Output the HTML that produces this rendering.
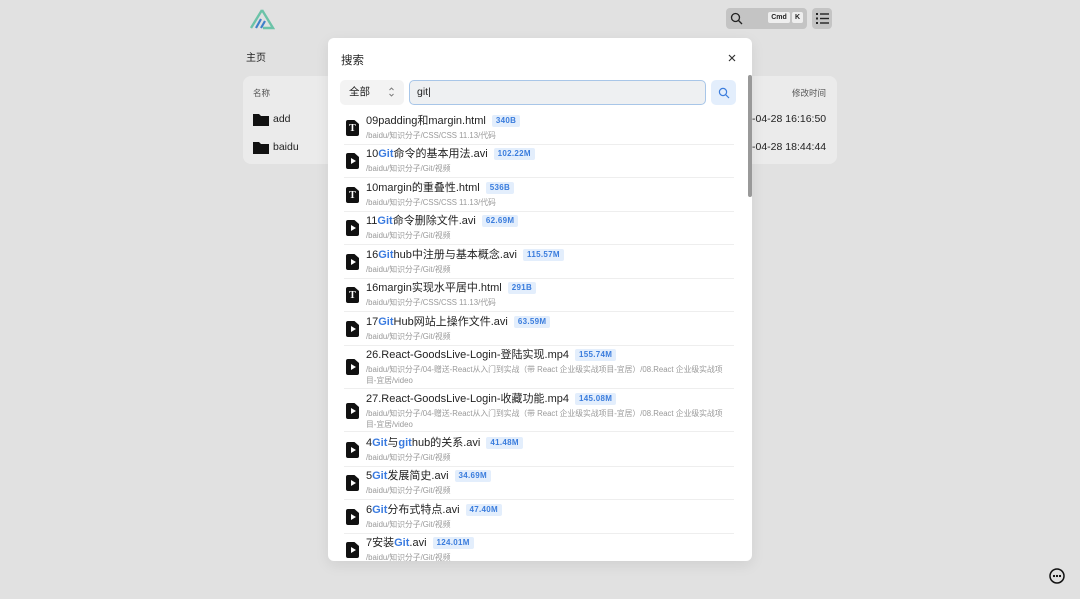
<!DOCTYPE html>
<html><head><meta charset="utf-8"><style>
*{margin:0;padding:0;box-sizing:border-box}
body{width:1080px;height:599px;background:#e1e1e1;font-family:"Liberation Sans","Noto Sans CJK SC",sans-serif;position:relative;overflow:hidden;color:#222}
.abs{position:absolute}
.card{left:243px;top:76px;width:594px;height:88px;background:#ebebeb;border-radius:8px}
.modal{left:328px;top:38px;width:424px;height:523px;background:#fff;border-radius:6px;overflow:hidden;box-shadow:0 4px 14px rgba(0,0,0,.08)}
.item{position:absolute;left:16px;width:390px}
.ic{position:absolute;left:2px;width:13px;height:16px;background:#111;border-radius:2px;clip-path:polygon(0 0,65% 0,100% 25%,100% 100%,0 100%)}
.ic.v::after{content:"";position:absolute;left:4.5px;top:5px;border-left:5px solid #fff;border-top:3px solid transparent;border-bottom:3px solid transparent}
.ic.tx{color:#fff;font:bold 10px 'Liberation Serif';text-align:center;line-height:17px}
.t{position:absolute;left:22px;font-size:11px;color:#222;white-space:nowrap;line-height:14px}
.t b{color:#3a7be0;font-weight:bold}
.bd{display:inline-block;margin-left:6px;background:#e3eefc;color:#3b7ddd;font-size:8px;font-weight:bold;padding:1px 4px;border-radius:2px;line-height:10px;vertical-align:1px;letter-spacing:.3px}
.p{position:absolute;left:22px;font-size:7.8px;color:#999;line-height:10.5px;width:372px}
.sep{position:absolute;left:16px;width:390px;height:1px;background:#eee}
</style></head><body>
<svg class="abs" style="left:249px;top:8px" width="26" height="22" viewBox="0 0 26 22"><path d="M13 2L2 20M13 2L24 20H14" stroke="#6cc3a8" stroke-width="2.4" fill="none"/><path d="M12 11L7 20M16 13l-4 7" stroke="#3f80c9" stroke-width="2.2"/></svg>
<div class="abs" style="left:726px;top:8px;width:81px;height:21px;background:#c4c4c4;border-radius:4px"></div>
<svg class="abs" style="left:730px;top:12px" width="13" height="13"><circle cx="5.5" cy="5.5" r="4" stroke="#222" stroke-width="1.3" fill="none"/><path d="M8.5 8.5L12 12" stroke="#222" stroke-width="1.3"/></svg>
<div class="abs" style="left:768px;top:12px;width:22px;height:11px;background:#eee;border-radius:2px;font-size:7px;font-weight:bold;text-align:center;line-height:11px">Cmd</div>
<div class="abs" style="left:792px;top:12px;width:11px;height:11px;background:#eee;border-radius:2px;font-size:7px;font-weight:bold;text-align:center;line-height:11px">K</div>
<div class="abs" style="left:812px;top:8px;width:20px;height:21px;background:#c4c4c4;border-radius:4px"></div>
<svg class="abs" style="left:816px;top:12px" width="13" height="13"><g fill="#222"><rect x="0" y="1" width="2" height="2"/><rect x="0" y="5.5" width="2" height="2"/><rect x="0" y="10" width="2" height="2"/><rect x="4" y="1.3" width="9" height="1.4"/><rect x="4" y="5.8" width="9" height="1.4"/><rect x="4" y="10.3" width="9" height="1.4"/></g></svg>
<div class="abs" style="left:246px;top:49px;font-size:10px">主页</div>
<div class="abs card"></div>
<div class="abs" style="left:253px;top:87px;font-size:8.5px;color:#555">名称</div>
<div class="abs" style="left:792px;top:87px;font-size:8.5px;color:#555">修改时间</div>
<svg class="abs" style="left:253px;top:113px" width="16" height="13"><path d="M0 1h6l2 2h8v10H0z" fill="#111"/></svg>
<div class="abs" style="left:273px;top:113px;font-size:10.5px">add</div>
<svg class="abs" style="left:253px;top:141px" width="16" height="13"><path d="M0 1h6l2 2h8v10H0z" fill="#111"/></svg>
<div class="abs" style="left:273px;top:141px;font-size:10.5px">baidu</div>
<div class="abs" style="left:752px;top:113px;font-size:10.5px">-04-28 16:16:50</div>
<div class="abs" style="left:752px;top:141px;font-size:10.5px">-04-28 18:44:44</div>
<svg class="abs" style="left:1048px;top:567px" width="18" height="18"><circle cx="9" cy="9" r="7" stroke="#111" stroke-width="1.5" fill="none"/><circle cx="6" cy="9" r="1.1"/><circle cx="9" cy="9" r="1.1"/><circle cx="12" cy="9" r="1.1"/></svg>

<div class="abs modal">
<div class="abs" style="left:13px;top:14px;font-size:11.5px">搜索</div>
<svg class="abs" style="left:400px;top:16px" width="8" height="8"><path d="M1 1L7 7M7 1L1 7" stroke="#333" stroke-width="1.2"/></svg>
<div class="abs" style="left:12px;top:42px;width:64px;height:25px;background:#f3f3f3;border-radius:5px;font-size:10.5px;line-height:25px;padding-left:9px">全部</div>
<svg class="abs" style="left:60px;top:48px" width="7" height="12"><path d="M1.5 4L3.5 2L5.5 4M1.5 8L3.5 10L5.5 8" stroke="#777" stroke-width="0.9" fill="none"/></svg>
<div class="abs" style="left:81px;top:42px;width:297px;height:25px;background:#eef0f2;border:1px solid #a8c6e8;border-radius:5px;font-size:10.5px;line-height:23px;padding-left:7px">git|</div>
<div class="abs" style="left:383px;top:42px;width:25px;height:25px;background:#e3eefc;border-radius:5px"></div>
<svg class="abs" style="left:390px;top:49px" width="12" height="12"><circle cx="5" cy="5" r="3.6" stroke="#3b7ddd" stroke-width="1.2" fill="none"/><path d="M7.7 7.7L11 11" stroke="#3b7ddd" stroke-width="1.2"/></svg>
<div class="abs" style="left:420px;top:37px;width:4px;height:122px;background:#999;border-radius:2px"></div>

<div class="item" style="top:76px"><div class="ic tx" style="top:6px">T</div><div class="t" style="top:0">09padding和margin.html<span class="bd">340B</span></div><div class="p" style="top:17px">/baidu/知识分子/CSS/CSS 11.13/代码</div></div>
<div class="sep" style="top:106px"></div>
<div class="item" style="top:109px"><div class="ic v" style="top:6px"></div><div class="t" style="top:0">10<b>Git</b>命令的基本用法.avi<span class="bd">102.22M</span></div><div class="p" style="top:17px">/baidu/知识分子/Git/视频</div></div>
<div class="sep" style="top:139px"></div>
<div class="item" style="top:143px"><div class="ic tx" style="top:6px">T</div><div class="t" style="top:0">10margin的重叠性.html<span class="bd">536B</span></div><div class="p" style="top:17px">/baidu/知识分子/CSS/CSS 11.13/代码</div></div>
<div class="sep" style="top:173px"></div>
<div class="item" style="top:176px"><div class="ic v" style="top:6px"></div><div class="t" style="top:0">11<b>Git</b>命令删除文件.avi<span class="bd">62.69M</span></div><div class="p" style="top:17px">/baidu/知识分子/Git/视频</div></div>
<div class="sep" style="top:206px"></div>
<div class="item" style="top:210px"><div class="ic v" style="top:6px"></div><div class="t" style="top:0">16<b>Git</b>hub中注册与基本概念.avi<span class="bd">115.57M</span></div><div class="p" style="top:17px">/baidu/知识分子/Git/视频</div></div>
<div class="sep" style="top:240px"></div>
<div class="item" style="top:243px"><div class="ic tx" style="top:6px">T</div><div class="t" style="top:0">16margin实现水平居中.html<span class="bd">291B</span></div><div class="p" style="top:17px">/baidu/知识分子/CSS/CSS 11.13/代码</div></div>
<div class="sep" style="top:273px"></div>
<div class="item" style="top:277px"><div class="ic v" style="top:6px"></div><div class="t" style="top:0">17<b>Git</b>Hub网站上操作文件.avi<span class="bd">63.59M</span></div><div class="p" style="top:17px">/baidu/知识分子/Git/视频</div></div>
<div class="sep" style="top:307px"></div>
<div class="item" style="top:310px"><div class="ic v" style="top:11px"></div><div class="t" style="top:0">26.React-GoodsLive-Login-登陆实现.mp4<span class="bd">155.74M</span></div><div class="p" style="top:17px">/baidu/知识分子/04-赠送-React从入门到实战（带 React 企业级实战项目-宜居）/08.React 企业级实战项<br>目-宜居/video</div></div>
<div class="sep" style="top:350px"></div>
<div class="item" style="top:354px"><div class="ic v" style="top:11px"></div><div class="t" style="top:0">27.React-GoodsLive-Login-收藏功能.mp4<span class="bd">145.08M</span></div><div class="p" style="top:17px">/baidu/知识分子/04-赠送-React从入门到实战（带 React 企业级实战项目-宜居）/08.React 企业级实战项<br>目-宜居/video</div></div>
<div class="sep" style="top:393px"></div>
<div class="item" style="top:398px"><div class="ic v" style="top:6px"></div><div class="t" style="top:0">4<b>Git</b>与<b>git</b>hub的关系.avi<span class="bd">41.48M</span></div><div class="p" style="top:17px">/baidu/知识分子/Git/视频</div></div>
<div class="sep" style="top:428px"></div>
<div class="item" style="top:431px"><div class="ic v" style="top:6px"></div><div class="t" style="top:0">5<b>Git</b>发展简史.avi<span class="bd">34.69M</span></div><div class="p" style="top:17px">/baidu/知识分子/Git/视频</div></div>
<div class="sep" style="top:461px"></div>
<div class="item" style="top:465px"><div class="ic v" style="top:6px"></div><div class="t" style="top:0">6<b>Git</b>分布式特点.avi<span class="bd">47.40M</span></div><div class="p" style="top:17px">/baidu/知识分子/Git/视频</div></div>
<div class="sep" style="top:495px"></div>
<div class="item" style="top:498px"><div class="ic v" style="top:6px"></div><div class="t" style="top:0">7安装<b>Git</b>.avi<span class="bd">124.01M</span></div><div class="p" style="top:17px">/baidu/知识分子/Git/视频</div></div>
</div>
</body></html>
